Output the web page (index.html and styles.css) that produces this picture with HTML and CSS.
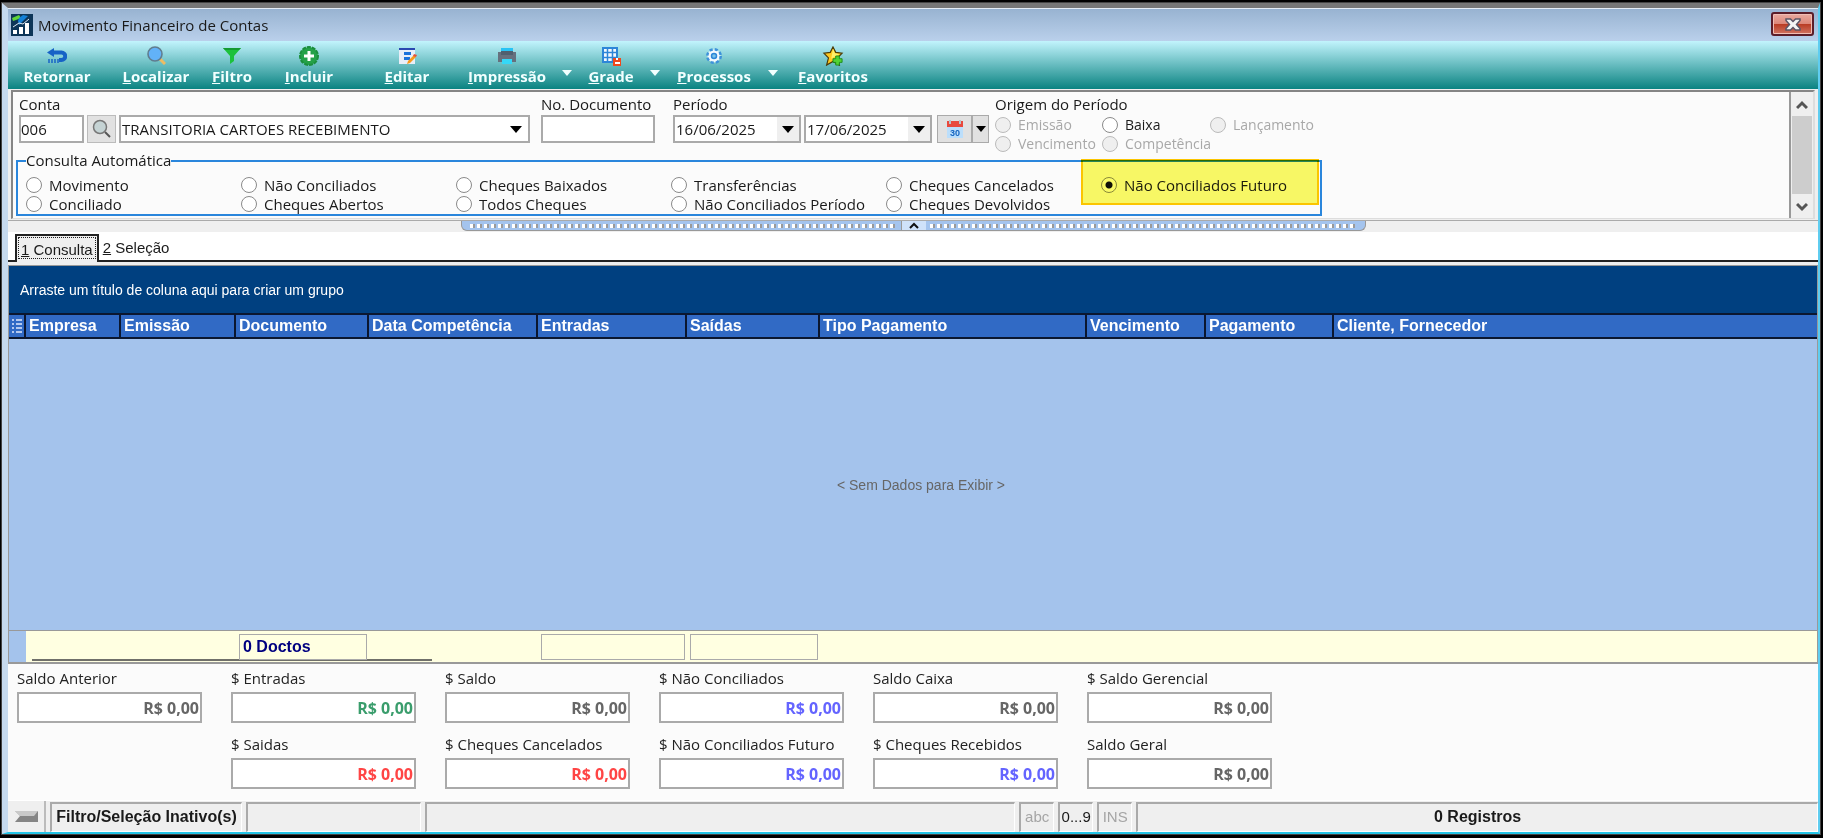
FILE: index.html
```html
<!DOCTYPE html>
<html lang="pt-BR">
<head>
  <meta charset="UTF-8">
  <meta name="viewport" content="width=device-width, initial-scale=1.0">
  <title>Movimento Financeiro de Contas</title>
  <link rel="stylesheet" href="styles.css">
</head>
<body>
  <div class="window">
    <header class="titlebar">
      <svg class="app-icon" width="22" height="22" viewBox="0 0 22 22">
        <rect width="22" height="22" fill="#0d3558"/>
        <path d="M1 4 8 1l2 3-5 2-3 1z" fill="#5fd43a"/>
        <path d="M8 4 12 1l5 1-4 4-5 5-1-4z" fill="#1380d8"/>
        <path d="M2 16h4v4H2zM8 13h4v7H8zM14 9h4v11h-4z" fill="#fff"/>
        <path d="M2 13 8 9l4 1 6-5" stroke="#dce8f4" fill="none"/>
      </svg>
      <h1>Movimento Financeiro de Contas</h1>
      <button class="close" aria-label="Fechar">
        <svg width="16" height="13" viewBox="0 0 16 13">
          <path d="M1 1h4.500l2.500 2.500L10.500 1H15v1.500L11.500 6.500 15 10.500V12h-4.500L8 9.500 5.500 12H1v-1.500l3.500-4L1 2.500z" fill="#f4f4f4" stroke="#5b5566" stroke-width="1.500"/>
        </svg>
      </button>
    </header>

    <nav class="toolbar">
      <button class="tool w98">
        <svg width="20" height="20" viewBox="0 0 20 20"><path d="M6 6.500h8.500a3.500 3.500 0 0 1 0 7.500H12" fill="none" stroke="#1763c6" stroke-width="4"/><path d="M0 6.500 7 2v9z" fill="#1763c6"/><path d="M2 13v4M5 13v4M8 13v4M11 13v4" stroke="#1763c6" stroke-width="1.500"/></svg>
        <span>Retornar</span>
      </button>
      <button class="tool w100">
        <svg width="20" height="20" viewBox="0 0 20 20"><path d="m14 13 5 5" stroke="#efbc62" stroke-width="3"/><circle cx="9" cy="8" r="7" fill="#62b2f8" stroke="#607d8f" stroke-width="1.600"/></svg>
        <span><u>L</u>ocalizar</span>
      </button>
      <button class="tool w52">
        <svg width="20" height="20" viewBox="0 0 20 20"><path d="M1 2h18l-7 8v5l-4 3v-8z" fill="#1cc13c"/><path d="M1 2h18l-2 2H3z" fill="#149a32"/></svg>
        <span><u>F</u>iltro</span>
      </button>
      <button class="tool w102">
        <svg width="20" height="20" viewBox="0 0 20 20"><circle cx="10" cy="10" r="9" fill="#24a148" stroke="#1b8e3c" stroke-width="2" stroke-dasharray="4 1"/><path d="M10 5v10M5 10h10" stroke="#fff" stroke-width="3"/></svg>
        <span><u>I</u>ncluir</span>
      </button>
      <button class="tool w94">
        <svg width="20" height="20" viewBox="0 0 20 20"><path d="M2 3h16v15H2z" fill="#e8eef8"/><path d="M2 2h16v2H2z" fill="#2a48b0"/><path d="M7 6h7v3H7zM7 11h6v3H7z" fill="#1b72dc"/><path d="m10 18 1-3 6-6 2 2-6 6z" fill="#f79a1c"/><path d="m16 10 1-2 3 1-1 2z" fill="#e5533c"/></svg>
        <span><u>E</u>ditar</span>
      </button>
      <button class="tool w106">
        <svg width="20" height="20" viewBox="0 0 20 20"><path d="M4 2h12v5H4z" fill="#27c3f5"/><path d="M1 6h18v10H1z" fill="#66717e"/><path d="M4 5h12v4H4z" fill="#50606f"/><path d="M5 13h10v5H5z" fill="#35d8f8"/></svg>
        <span><u>I</u>mpressão</span>
      </button>
      <button class="drop" aria-label="Opções de impressão"></button>
      <button class="tool w74">
        <svg width="20" height="20" viewBox="0 0 20 20"><path d="M2 2h14v14H2z" fill="#f3f9ff" stroke="#2d86d8" stroke-width="2"/><path d="M6.500 2v14M11.500 2v14M2 6.500h14M2 11.500h14" stroke="#2d86d8" stroke-width="1.500"/><path d="M12 12h8v8h-8z" fill="#f1481c"/><path d="M15 12h2v2h-2zM14 16h5v2h-5z" fill="#fff"/></svg>
        <span><u>G</u>rade</span>
      </button>
      <button class="drop" aria-label="Opções de grade"></button>
      <button class="tool w104">
        <svg width="20" height="20" viewBox="0 0 20 20"><circle cx="10" cy="10" r="6.500" fill="#eef7ff" stroke="#3d92da" stroke-width="3" stroke-dasharray="3 2.100"/><circle cx="10" cy="10" r="5.500" fill="#f4faff"/><circle cx="10" cy="10" r="2.500" fill="#7cc4ea" stroke="#2d86d8" stroke-width="1.500"/></svg>
        <span><u>P</u>rocessos</span>
      </button>
      <button class="drop" aria-label="Opções de processos"></button>
      <button class="tool w106">
        <svg width="22" height="22" viewBox="0 0 22 22"><path d="m11 1 3 6 7 1-5 5 2 8-7-4-7 4 2-8-5-5 7-1z" fill="#ffc81f" stroke="#4a3a08" stroke-width="1.300"/><path d="m11 3 2 5 5 1-9 5z" fill="#fff06a"/><path d="M14 11h4v3h3v4h-3v3h-4v-3h-3v-4h3z" fill="#52d434" stroke="#198a19"/></svg>
        <span><u>F</u>avoritos</span>
      </button>
    </nav>

    <section class="filters">
      <div class="filters-body">
        <div class="filter-row">
          <div class="field">
            <label for="conta">Conta</label>
            <div class="controls">
              <input id="conta" class="box conta" type="text" value="006">
              <button class="search" aria-label="Pesquisar conta">
                <svg width="20" height="20" viewBox="0 0 20 20"><path d="m13 13 5 5" stroke="#555" stroke-width="2"/><circle cx="8" cy="8" r="6.500" fill="#c5d3d4" stroke="#777" stroke-width="1.500"/></svg>
              </button>
              <span class="select box">
                <select class="nome" aria-label="Nome da conta"><option>TRANSITORIA CARTOES RECEBIMENTO</option></select>
              </span>
            </div>
          </div>
          <div class="field">
            <label for="documento">No. Documento</label>
            <input id="documento" class="box documento" type="text">
          </div>
          <div class="field periodo">
            <label for="inicio">Período</label>
            <div class="controls">
              <span class="date box"><input id="inicio" type="text" value="16/06/2025"><button aria-label="Abrir data inicial"></button></span>
              <span class="date box"><input type="text" value="17/06/2025" aria-label="Data final"><button aria-label="Abrir data final"></button></span>
              <span class="calendar">
                <button class="cal-main" aria-label="Calendário">
                  <svg width="18" height="18" viewBox="0 0 18 18"><path d="M1 1h16v17H1z" fill="#bbdefb"/><path d="M1 1h16v6H1z" fill="#e8493d"/><path d="M4 0v4M14 0v4" stroke="#b9c4cb" stroke-width="2"/><text x="9" y="16" class="cal-day">30</text></svg>
                </button>
                <button class="cal-drop" aria-label="Opções do período"></button>
              </span>
            </div>
          </div>
          <div class="field" role="radiogroup" aria-labelledby="origem">
            <span id="origem" class="group-label">Origem do Período</span>
            <div class="origem">
              <label><input type="radio" name="origem" disabled>Emissão</label>
              <label><input type="radio" name="origem">Baixa</label>
              <label><input type="radio" name="origem" disabled>Lançamento</label>
              <label><input type="radio" name="origem" disabled>Vencimento</label>
              <label><input type="radio" name="origem" disabled>Competência</label>
            </div>
          </div>
        </div>

        <fieldset class="consulta">
          <legend>Consulta Automática</legend>
          <label><input type="radio" name="consulta">Movimento</label>
          <label><input type="radio" name="consulta">Conciliado</label>
          <label><input type="radio" name="consulta">Não Conciliados</label>
          <label><input type="radio" name="consulta">Cheques Abertos</label>
          <label><input type="radio" name="consulta">Cheques Baixados</label>
          <label><input type="radio" name="consulta">Todos Cheques</label>
          <label><input type="radio" name="consulta">Transferências</label>
          <label><input type="radio" name="consulta">Não Conciliados Período</label>
          <label><input type="radio" name="consulta">Cheques Cancelados</label>
          <label><input type="radio" name="consulta">Cheques Devolvidos</label>
          <label><input type="radio" name="consulta" checked>Não Conciliados Futuro</label>
          <div class="highlight"></div>
        </fieldset>
      </div>
      <div class="scrollbar">
        <button aria-label="Rolar para cima"><svg width="12" height="10" viewBox="0 0 12 10"><path d="m1 8 5-5 5 5" fill="none" stroke="#555" stroke-width="3"/></svg></button>
        <div class="thumb"></div>
        <button aria-label="Rolar para baixo"><svg width="12" height="10" viewBox="0 0 12 10"><path d="m1 2 5 5 5-5" fill="none" stroke="#555" stroke-width="3"/></svg></button>
      </div>
    </section>

    <div class="splitter">
      <div class="handle">
        <span class="dots"></span>
        <button aria-label="Recolher filtros"><svg width="10" height="8" viewBox="0 0 10 8"><path d="m1 6 4-4 4 4" fill="none" stroke="#111" stroke-width="2"/></svg></button>
        <span class="dots"></span>
      </div>
    </div>

    <div class="tabs" role="tablist">
      <button class="tab active" role="tab" aria-selected="true"><u>1</u> Consulta</button>
      <button class="tab" role="tab" aria-selected="false"><u>2</u> Seleção</button>
    </div>

    <main class="grid">
      <div class="group-bar">Arraste um título de coluna aqui para criar um grupo</div>
      <div class="table-wrap">
        <table>
          <colgroup>
            <col class="c-mark"><col class="c-empresa"><col class="c-emissao"><col class="c-documento">
            <col class="c-data"><col class="c-entradas"><col class="c-saidas"><col class="c-tipo">
            <col class="c-vencimento"><col class="c-pagamento"><col>
          </colgroup>
          <thead>
            <tr>
              <th class="mark"><svg width="10" height="14" viewBox="0 0 10 14"><path d="M0 1h2M0 5h2M0 9h2M0 13h2M4 1h6M4 5h6M4 9h6M4 13h6" stroke="#dfe8fb" stroke-width="1.500"/></svg></th>
              <th>Empresa</th>
              <th>Emissão</th>
              <th>Documento</th>
              <th>Data Competência</th>
              <th>Entradas</th>
              <th>Saídas</th>
              <th>Tipo Pagamento</th>
              <th>Vencimento</th>
              <th>Pagamento</th>
              <th>Cliente, Fornecedor</th>
            </tr>
          </thead>
          <tbody>
            <tr><td class="empty" colspan="11">&lt; Sem Dados para Exibir &gt;</td></tr>
          </tbody>
          <tfoot>
            <tr>
              <td class="mark"></td>
              <td class="rule first"></td>
              <td class="rule"></td>
              <td class="rule"><div class="sum">0 Doctos</div></td>
              <td class="half"></td>
              <td><div class="sum"></div></td>
              <td><div class="sum"></div></td>
              <td colspan="4"></td>
            </tr>
          </tfoot>
        </table>
      </div>
    </main>

    <section class="totals">
      <div class="total"><label for="t1">Saldo Anterior</label><input id="t1" type="text" value="R$ 0,00" readonly></div>
      <div class="total green"><label for="t2">$ Entradas</label><input id="t2" type="text" value="R$ 0,00" readonly></div>
      <div class="total"><label for="t3">$ Saldo</label><input id="t3" type="text" value="R$ 0,00" readonly></div>
      <div class="total blue"><label for="t4">$ Não Conciliados</label><input id="t4" type="text" value="R$ 0,00" readonly></div>
      <div class="total"><label for="t5">Saldo Caixa</label><input id="t5" type="text" value="R$ 0,00" readonly></div>
      <div class="total"><label for="t6">$ Saldo Gerencial</label><input id="t6" type="text" value="R$ 0,00" readonly></div>
      <div class="total red second"><label for="t7">$ Saidas</label><input id="t7" type="text" value="R$ 0,00" readonly></div>
      <div class="total red"><label for="t8">$ Cheques Cancelados</label><input id="t8" type="text" value="R$ 0,00" readonly></div>
      <div class="total blue"><label for="t9">$ Não Conciliados Futuro</label><input id="t9" type="text" value="R$ 0,00" readonly></div>
      <div class="total blue"><label for="t10">$ Cheques Recebidos</label><input id="t10" type="text" value="R$ 0,00" readonly></div>
      <div class="total"><label for="t11">Saldo Geral</label><input id="t11" type="text" value="R$ 0,00" readonly></div>
    </section>

    <footer class="status">
      <button class="status-btn" aria-label="Filtro">
        <svg width="23" height="11" viewBox="0 0 23 11"><path d="M0 0h23v11H0z" fill="#858585"/><path d="M0 0h23l-4 5H5z" fill="#c9c9c9"/><path d="m0 0 5 5-5 6z" fill="#eee"/></svg>
      </button>
      <div class="pane s-filter"><b>Filtro/Seleção Inativo(s)</b></div>
      <div class="pane s-a"></div>
      <div class="pane s-b"></div>
      <div class="pane s-key off">abc</div>
      <div class="pane s-key">0...9</div>
      <div class="pane s-key off">INS</div>
      <div class="pane s-count"><b>0 Registros</b></div>
    </footer>
  </div>
</body>
</html>
```

FILE: styles.css
```css
* {
  box-sizing: border-box;
}

body {
  margin: 0;
  padding: 3px 3px 4px 2px;
  height: 100vh;
  background: #000;
  font-family: "Open Sans", "Noto Sans", sans-serif;
  font-size: 15px;
  color: #1a1a1a;
}

button, input, select {
  font: inherit;
  color: inherit;
  margin: 0;
  padding: 0;
  border: 0;
  outline: none;
  border-radius: 0;
}

.window {
  height: 100%;
  display: flex;
  flex-direction: column;
  background: #efefef;
  border: 1px solid #777;
  border-right: 2px solid #5fcdf0;
  border-bottom: 2px solid #23c4e6;
  border-left: 6px solid #c5d9ee;
  border-top: 5px solid #777;
  outline: 1px solid #444;
}

/* title */
.titlebar {
  flex: none;
  height: 33px;
  display: flex;
  align-items: center;
  padding: 0 4px 0 3px;
  background: linear-gradient(#98b3d1, #bad0eb);
  border-top: 1px solid #e4edf6;
}

.titlebar h1 {
  flex: 1;
  margin: 0 0 0 5px;
  font-size: 15px;
  font-weight: 400;
}

.close {
  display: flex;
  align-items: center;
  justify-content: center;
  width: 43px;
  height: 24px;
  margin-bottom: 2px;
  border: 2px solid #5b1d29;
  border-radius: 3px;
  background: linear-gradient(#e9aaa0, #dc8779 48%, #b83a22 50%, #d07462);
  box-shadow: inset 0 0 0 1px #f0bdb5;
}

/* toolbar */
.toolbar {
  flex: none;
  height: 48px;
  display: flex;
  background: linear-gradient(#c2f4fd, #0a8381);
}

.tool {
  display: flex;
  flex-direction: column;
  align-items: center;
  justify-content: flex-start;
  padding-top: 5px;
  background: none;
  color: #f2ffff;
  font-size: 15px;
  font-weight: 700;
  line-height: 20px;
}

.tool svg {
  flex: none;
  height: 20px;
}

.w52 { width: 52px; }
.w74 { width: 74px; }
.w94 { width: 94px; }
.w98 { width: 98px; }
.w100 { width: 100px; }
.w102 { width: 102px; }
.w104 { width: 104px; }
.w106 { width: 106px; }

.drop {
  display: flex;
  justify-content: center;
  width: 14px;
  padding-top: 29px;
  background: none;
}

.drop::after {
  content: "";
  border: 5px solid transparent;
  border-top: 6px solid #f2ffff;
  border-bottom: 0;
}

/* filters */
.filters {
  flex: none;
  display: flex;
  margin: 1px 3px 0;
  border: 2px solid #858585;
  border-bottom: 1px solid #ddd;
  border-right-color: #ddd;
  background: #fbfbfb;
}

.filters-body {
  flex: 1;
  padding: 2px 0 0 3px;
}

.filter-row {
  display: flex;
  gap: 11px;
  height: 52px;
  padding-left: 3px;
}

.field {
  display: flex;
  flex-direction: column;
}

.field > label, .group-label {
  flex: none;
  height: 21px;
  line-height: 20px;
}

.periodo {
  margin-left: 7px;
  margin-right: -5px;
}

.controls {
  display: flex;
  gap: 3px;
}

.box {
  height: 28px;
  border: 2px solid #aaa;
  background: #fff;
}

.conta {
  width: 65px;
}

.search {
  width: 29px;
  height: 28px;
  display: flex;
  align-items: center;
  justify-content: center;
  background: #e1e1e1;
  border: 1px solid #bbb;
}

.select, .date {
  display: flex;
  position: relative;
}

.select select {
  width: 407px;
  padding-left: 1px;
  appearance: none;
  background: #fff;
}

.select::after {
  content: "";
  position: absolute;
  right: 6px;
  top: 9px;
  border: 6px solid transparent;
  border-top: 7px solid #000;
  border-bottom: 0;
}

.documento {
  width: 114px;
}

.date {
  width: 128px;
}

.date input {
  flex: 1;
  min-width: 0;
  padding-left: 1px;
}

.date button, .cal-drop {
  display: flex;
  align-items: center;
  justify-content: center;
  width: 22px;
  background: #efefef;
}

.date button::after, .cal-drop::after {
  content: "";
  border: 6px solid transparent;
  border-top: 7px solid #000;
  border-bottom: 0;
}

.calendar {
  display: flex;
  margin-left: 2px;
  border: 1px solid #aaa;
}

.calendar button {
  background: #e1e1e1;
}

.cal-main {
  display: flex;
  align-items: center;
  justify-content: center;
  width: 33px;
}

.calendar .cal-drop {
  width: 17px;
  border-left: 2px solid #aaa;
}

.calendar .cal-drop::after {
  border-width: 6px 5px 0;
}

.cal-day {
  font: 700 9px "Liberation Sans", Arial, sans-serif;
  text-anchor: middle;
  fill: #1565c0;
}

.origem {
  display: grid;
  grid-template-columns: 107px 108px 120px;
  grid-auto-rows: 19px;
}

.origem label, .consulta label {
  display: flex;
  align-items: center;
  gap: 7px;
  white-space: nowrap;
}

.origem label {
  font-size: 14px;
}

.origem label:has(:disabled) {
  color: #a8a8a8;
}

input[type="radio"] {
  appearance: none;
  flex: none;
  width: 16px;
  height: 16px;
  border: 1px solid #8a8a8a;
  border-radius: 50%;
  background: #fff;
}

input[type="radio"]:disabled {
  background: #efefef;
  border-color: #bbb;
}

input[type="radio"]:checked {
  background: radial-gradient(circle, #111 3px, #fff 4px);
}

.consulta {
  position: relative;
  display: grid;
  grid-template-rows: 19px 19px;
  grid-auto-flow: column;
  grid-auto-columns: 215px;
  width: 1306px;
  margin: 4px 0 2px;
  padding: 4px 0 1px 8px;
  border: 2px solid #2a86dc;
}

.consulta legend {
  height: 21px;
  padding: 0;
  font-size: 15px;
  line-height: 20px;
}

.highlight {
  position: absolute;
  right: 1px;
  top: -12px;
  width: 238px;
  height: 46px;
  border: 2px solid #ffc800;
  background: #fbfb66;
  mix-blend-mode: multiply;
}

.scrollbar {
  display: flex;
  flex-direction: column;
  width: 24px;
  border-left: 2px solid #999;
  background: #efefef;
}

.scrollbar button {
  height: 24px;
  background: none;
}

.scrollbar .thumb {
  flex: 1;
  margin: 0 1px;
  background: #cdcdcd;
}

/* splitter */
.splitter {
  flex: none;
  height: 12px;
  margin-top: 1px;
  border-top: 1px solid #aaa;
}

.handle {
  display: flex;
  align-items: center;
  width: 50%;
  height: 10px;
  margin: 0 auto;
  padding: 0 8px;
  background: #a4c4ee;
  border: 1px solid #999;
  border-top: 0;
  border-radius: 0 0 6px 6px;
}

.dots {
  flex: 1;
  height: 4px;
  background: repeating-linear-gradient(90deg, #fff 0 3px, #9a9a9a 3px 5px, #a4c4ee 5px 7px);
}

.handle button {
  display: flex;
  align-items: center;
  justify-content: center;
  width: 25px;
  height: 9px;
  margin: 0 4px;
  background: #cfe2fa;
  border-left: 1px solid #999;
}

/* tabs */
.tabs {
  flex: none;
  display: flex;
  align-items: flex-end;
  height: 30px;
  margin-bottom: 3px;
  padding-left: 7px;
  background: #fff;
  border-bottom: 2px solid #222;
  font-family: "Liberation Sans", Arial, sans-serif;
}

.tab {
  height: 26px;
  padding: 0 4px;
  background: none;
}

.tab.active {
  margin-bottom: -2px;
  height: 28px;
  border: 2px solid #222;
  border-bottom: 0;
  background: #efefef;
  outline: 1px dotted #222;
  outline-offset: -4px;
}

/* grid */
.grid {
  flex: 1;
  min-height: 0;
  display: flex;
  flex-direction: column;
  border: 1px solid #999;
  border-bottom-width: 2px;
  font-family: "Liberation Sans", Arial, sans-serif;
}

.group-bar {
  flex: none;
  height: 47px;
  padding-left: 11px;
  background: #004080;
  color: #fff;
  font-size: 14px;
  line-height: 48px;
}

.table-wrap {
  flex: 1;
  min-height: 0;
  display: grid;
}

table {
  width: 100%;
  height: 100%;
  table-layout: fixed;
  border-collapse: separate;
  border-spacing: 0;
  background: #a4c3ec;
}

.c-mark { width: 17px; }
.c-empresa { width: 95px; }
.c-emissao { width: 115px; }
.c-documento { width: 133px; }
.c-data { width: 169px; }
.c-entradas { width: 149px; }
.c-saidas { width: 133px; }
.c-tipo { width: 267px; }
.c-vencimento { width: 119px; }
.c-pagamento { width: 128px; }

th {
  height: 26px;
  padding: 0 3px;
  background: #316ac5;
  border: solid #0b1730;
  border-width: 2px 2px 2px 0;
  color: #fff;
  font-size: 16px;
  font-weight: 700;
  line-height: 20px;
  text-align: left;
  white-space: nowrap;
}

th:last-child {
  border-right: 0;
}

th.mark {
  text-align: center;
  padding: 0 1px;
  line-height: 10px;
}

.empty {
  padding: 0 0 0 16px;
  color: #666;
  font-size: 14px;
  text-align: center;
}

tfoot td {
  height: 32px;
  padding: 3px 2px 2px 3px;
  background: #ffffe1;
  border-top: 1px solid #999;
}

tfoot td.mark {
  background: #a4c3ec;
}

tfoot .rule, tfoot .half {
  background: linear-gradient(#70706a, #70706a) 0 28px / 100% 2px no-repeat #ffffe1;
}

tfoot .first {
  background-position: 6px 28px;
}

tfoot .half {
  background-size: 63px 2px;
}

.sum {
  height: 26px;
  padding-left: 3px;
  border: 1px solid #aaa;
  color: #000080;
  font-size: 16px;
  font-weight: 700;
  line-height: 24px;
}

/* totals */
.totals {
  flex: none;
  display: grid;
  grid-template-columns: repeat(6, 185px);
  gap: 11px 29px;
  padding: 4px 9px 11px;
  background: #fbfbfb;
}

.total {
  display: flex;
  flex-direction: column;
  color: #666;
}

.total label {
  height: 24px;
  color: #222;
  line-height: 20px;
}

.total input {
  width: 100%;
  height: 31px;
  padding-right: 1px;
  border: 2px solid #aaa;
  background: #fff;
  font-size: 16px;
  font-weight: 700;
  text-align: right;
}

.second { grid-column: 2; }
.green { color: #3a9d6c; }
.red { color: #ff4545; }
.blue { color: #6464ff; }

/* status */
.status {
  flex: none;
  display: flex;
  gap: 4px;
  height: 32px;
  border-top: 1px solid #fff;
  font-family: "Liberation Sans", Arial, sans-serif;
}

.status b {
  font-size: 16px;
}

.status-btn {
  display: flex;
  align-items: center;
  justify-content: center;
  width: 38px;
  background: #efefef;
  border-right: 2px solid #bbb;
}

.pane {
  margin-top: 1px;
  border: 1px solid #fff;
  border-top: 2px solid #aaa;
  border-left: 2px solid #aaa;
  line-height: 26px;
  text-align: center;
  white-space: nowrap;
}

.s-filter { width: 192px; }
.s-a { width: 175px; }
.s-b { flex: 589; }
.s-key { width: 35px; }
.s-count { flex: 681; }
.off { color: #a5a5a5; }
```
